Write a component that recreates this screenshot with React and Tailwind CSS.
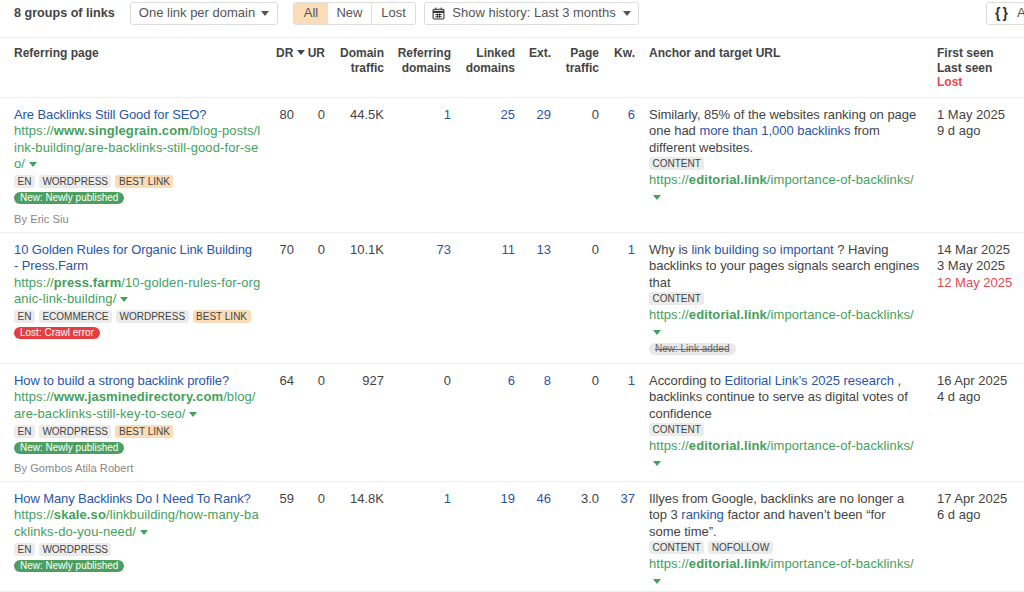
import React from "react";

const Caret = ({ className = "" }) => (
  <svg viewBox="0 0 8 5" className={`inline-block w-[8px] h-[5px] ${className}`} fill="currentColor"><path d="M0 0h8L4 5z" /></svg>
);

const Tag = ({ children, best }) => (
  <span className={`inline-block h-[13px] leading-[13px] px-[3.5px] rounded-[3px] text-[10px] text-[#444] ${best ? "bg-[#fbdcb8]" : "bg-[#ebebeb]"}`}>{children}</span>
);

const Pill = ({ children, kind }) => {
  const cls = kind === "new" ? "bg-[#4c9f5f] text-white" : kind === "lost" ? "bg-[#e53e3e] text-white" : "bg-[#e8e8e8] text-[#666] line-through";
  return <span className={`inline-block h-[12px] leading-[12px] px-[6px] rounded-full text-[10px] ${cls}`}>{children}</span>;
};

const Url = ({ pre, bold, rest }) => (
  <>
    {pre}<b className="font-bold">{bold}</b>{rest}
  </>
);

const rows = [
  {
    h: "h-[135px]",
    title: "Are Backlinks Still Good for SEO?",
    url: ["https://", "www.singlegrain.com", "/blog-posts/link-building/are-backlinks-still-good-for-seo/"],
    tags: [["EN"], ["WORDPRESS"], ["BEST LINK", true]],
    pill: ["New: Newly published", "new"],
    by: "By Eric Siu",
    dr: "80", dt: "44.5K", rd: "1", ld: "25", ext: "29", pt: "0", kw: "6",
    anchor: <>Similarly, 85% of the websites ranking on page one had <a className="text-[#2a55a8]">more than 1,000 backlinks</a> from different websites.</>,
    atags: ["CONTENT"],
    dates: ["1 May 2025", "9 d ago"],
  },
  {
    h: "h-[131px]",
    title: <>10 Golden Rules for Organic Link Building<br />- Press.Farm</>,
    url: ["https://", "press.farm", "/10-golden-rules-for-organic-link-building/"],
    tags: [["EN"], ["ECOMMERCE"], ["WORDPRESS"], ["BEST LINK", true]],
    pill: ["Lost: Crawl error", "lost"],
    dr: "70", dt: "10.1K", rd: "73", ld: "11", ext: "13", pt: "0", kw: "1",
    anchor: <>Why is <a className="text-[#2a55a8]">link building so important</a> ? Having backlinks to your pages signals search engines that</>,
    atags: ["CONTENT"],
    apill: "New: Link added",
    dates: ["14 Mar 2025", "3 May 2025"],
    lost: "12 May 2025",
  },
  {
    h: "h-[118px]",
    title: "How to build a strong backlink profile?",
    url: ["https://", "www.jasminedirectory.com", "/blog/are-backlinks-still-key-to-seo/"],
    tags: [["EN"], ["WORDPRESS"], ["BEST LINK", true]],
    pill: ["New: Newly published", "new"],
    by: "By Gombos Atila Robert",
    dr: "64", dt: "927", rd: "0", ld: "6", ext: "8", pt: "0", kw: "1",
    anchor: <>According to <a className="text-[#2a55a8]">Editorial Link’s 2025 research</a> , backlinks continue to serve as digital votes of confidence</>,
    atags: ["CONTENT"],
    dates: ["16 Apr 2025", "4 d ago"],
  },
  {
    h: "h-[110px]",
    title: "How Many Backlinks Do I Need To Rank?",
    url: ["https://", "skale.so", "/linkbuilding/how-many-backlinks-do-you-need/"],
    tags: [["EN"], ["WORDPRESS"]],
    pill: ["New: Newly published", "new"],
    dr: "59", dt: "14.8K", rd: "1", ld: "19", ext: "46", pt: "3.0", kw: "37",
    anchor: <>Illyes from Google, backlinks are no longer a top 3 <a className="text-[#2a55a8]">ranking</a> factor and haven’t been “for some time”.</>,
    atags: ["CONTENT", "NOFOLLOW"],
    dates: ["17 Apr 2025", "6 d ago"],
  },
];

const num = "align-top text-right pt-[9px] pl-0 pr-[7px]";
const link = "text-[#2a55a8]";

export default function App() {
  return (
    <div className="w-[1024px] h-[592px] overflow-hidden bg-white text-[#444] text-[13px] leading-[16.5px] font-['Liberation_Sans',Arial,sans-serif]">
      <div className="h-[38px] flex items-start pt-[2px] border-b border-[#eeeeee] pl-[14px] relative">
        <span className="font-bold w-[116px] text-[12.6px] leading-[23px] text-[#444]">8 groups of links</span>
        <button className="h-[23px] w-[148px] border border-[#dddddd] rounded-[3px] flex items-center justify-center gap-[6px] text-[#555]">One link per domain <Caret /></button>
        <div className="ml-[15px] h-[23px] w-[123px] flex border border-[#dddddd] rounded-[3px] overflow-hidden text-[#555]">
          <span className="w-[34px] bg-[#fbdcb8] flex items-center justify-center">All</span>
          <span className="w-[44px] flex items-center justify-center border-r border-[#dddddd]">New</span>
          <span className="flex-1 flex items-center justify-center">Lost</span>
        </div>
        <button className="ml-[8px] h-[23px] w-[215px] border border-[#dddddd] rounded-[3px] flex items-center justify-center gap-[7px] text-[#555]">
          <svg viewBox="0 0 12 12" className="w-[13px] h-[13px]" fill="none" stroke="#333">
            <rect x="1" y="2" width="10" height="9" rx="1" />
            <path d="M1 4.5h10" strokeWidth="2" />
            <path d="M3.5 0.5v2M8.5 0.5v2M3 7h6M3 9h6M5 6v4M7 6v4" strokeWidth="0.9" />
          </svg>
          Show history: Last 3 months <Caret />
        </button>
        <div className="absolute left-[986px] top-[2px] w-[60px] h-[23px] border border-[#dddddd] rounded-[3px] flex items-center pl-[8px] gap-[7px] text-[#555]">
          <b className="font-bold text-[14px] text-[#333] tracking-[2px]">{"{}"}</b><span>A</span>
        </div>
      </div>
      <table className="table-fixed border-collapse w-[1024px]">
        <colgroup>
          <col className="w-[272px]" /><col className="w-[32px]" /><col className="w-[28px]" /><col className="w-[59px]" /><col className="w-[67px]" /><col className="w-[64px]" /><col className="w-[36px]" /><col className="w-[48px]" /><col className="w-[36px]" /><col className="w-[288px]" /><col className="w-[94px]" />
        </colgroup>
        <thead>
          <tr className="h-[59px] border-b border-[#eeeeee] text-[12px] leading-[14.7px] text-[#444] [&>th]:align-top [&>th]:pt-[8px] [&>th]:font-bold [&>th]:pr-[7px] [&>th]:text-right">
            <th className="!text-left pl-[14px]">Referring page</th>
            <th className="whitespace-nowrap !pr-0 !text-left pl-[4px]">DR <Caret className="mb-[2px]" /></th>
            <th>UR</th>
            <th>Domain traffic</th>
            <th>Referring domains</th>
            <th>Linked domains</th>
            <th>Ext.</th>
            <th>Page traffic</th>
            <th>Kw.</th>
            <th className="!text-left pl-[7px]">Anchor and target URL</th>
            <th className="!text-left pl-[7px] !pr-0 whitespace-nowrap">First seen<br />Last seen<br /><span className="text-[#e5484d]">Lost</span></th>
          </tr>
        </thead>
        <tbody>
          {rows.map((r) => (
            <tr key={r.dr} className={`${r.h} border-b border-[#eeeeee]`}>
              <td className="align-top pt-[9px] pl-[14px] pr-[11px]">
                <a className={`block tracking-[-0.1px] ${link}`}>{r.title}</a>
                <div className="text-[#45a05c] break-all tracking-[0.1px]">
                  <Url pre={r.url[0]} bold={r.url[1]} rest={r.url[2]} /> <Caret />
                </div>
                <div className="flex gap-[4px] mt-[1px] h-[16px] items-center">
                  {r.tags.map(([t, b]) => <Tag key={t} best={b}>{t}</Tag>)}
                </div>
                <div className="h-[17px] flex items-center"><Pill kind={r.pill[1]}>{r.pill[0]}</Pill></div>
                {r.by && <div className="text-[#888] text-[11.2px] mt-[4px]">{r.by}</div>}
              </td>
              <td className="align-top text-right pt-[9px] pr-[10px]">{r.dr}</td>
              <td className={num}>0</td>
              <td className={num}>{r.dt}</td>
              <td className={`${num} ${r.rd === "0" ? "" : link}`}>{r.rd}</td>
              <td className={`${num} ${link}`}>{r.ld}</td>
              <td className={`${num} ${link}`}>{r.ext}</td>
              <td className={num}>{r.pt}</td>
              <td className={`${num} ${link}`}>{r.kw}</td>
              <td className="align-top pt-[9px] pl-[7px] pr-[10px]">
                <div className="tracking-[-0.03px]">{r.anchor}</div>
                <div className="flex gap-[4px] h-[15px] items-center">
                  {r.atags.map((t) => <Tag key={t}>{t}</Tag>)}
                </div>
                <div className="text-[#45a05c] whitespace-nowrap h-[18px] pt-[1px] tracking-[0.1px]"><Url pre="https://" bold="editorial.link" rest="/importance-of-backlinks/" /></div>
                <div className="h-[16px] flex items-center pl-[4px] text-[#45a05c]"><Caret /></div>
                {r.apill && <div className="h-[17px] flex items-center"><Pill>{r.apill}</Pill></div>}
              </td>
              <td className="align-top pt-[9px] pl-[7px] whitespace-nowrap">
                {r.dates.map((d) => <div key={d}>{d}</div>)}
                {r.lost && <div className="text-[#e5484d]">{r.lost}</div>}
              </td>
            </tr>
          ))}
        </tbody>
      </table>
    </div>
  );
}
